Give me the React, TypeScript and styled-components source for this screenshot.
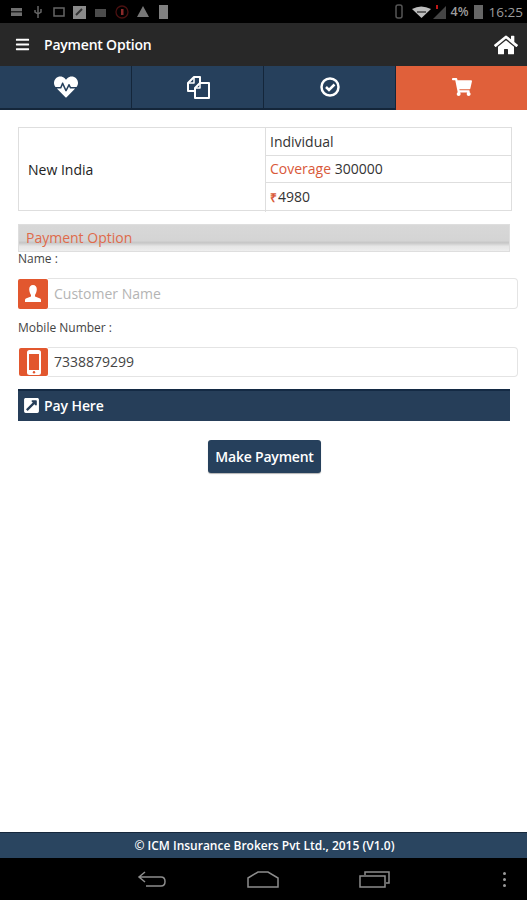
import styled, { createGlobalStyle } from "styled-components";
import { FaBars, FaHome, FaShoppingCart, FaHeartbeat, FaExternalLinkSquareAlt } from "react-icons/fa";

const GlobalStyle = createGlobalStyle`
  html, body { margin: 0; padding: 0; background: #fff; }
  * { box-sizing: border-box; }
  body { font-family: "Open Sans", "Liberation Sans", sans-serif; color: #222; }
`;

const tabs = [
  { key: "health", icon: <FaHeartbeat size={24} /> },
  {
    key: "docs",
    icon: (
      <svg width="24" height="23" viewBox="0 0 24 23" fill="none" stroke="#fff" strokeWidth="2" strokeLinejoin="round">
        <path d="M9 15H2V7l6-6h6v6" />
        <path d="M8 1v6H2" strokeWidth="1.5" />
        <path d="M9 22V12l5-5h9v15z" />
        <path d="M14 7v5H9" strokeWidth="1.5" />
      </svg>
    ),
  },
  {
    key: "check",
    icon: (
      <svg width="20" height="20" viewBox="0 0 20 20" fill="none" stroke="#fff" strokeWidth="2.5">
        <circle cx="10" cy="10" r="8.500" />
        <path d="M6 10l3 3 5.500-5.500" />
      </svg>
    ),
  },
  { key: "cart", icon: <FaShoppingCart size={20} />, active: true },
];

export default function App() {
  return (
    <Page>
      <GlobalStyle />
      <StatusBar>
        <svg width="170" height="16" viewBox="0 0 170 16">
          <rect x="11" y="4" width="11" height="8" fill="#6f6f6f" />
          <rect x="11" y="7" width="11" height="1.5" fill="#222" />
          <path d="M38 2v12M35 6v2l3 2M41 5v3l-3 2" stroke="#666" strokeWidth="1.5" fill="none" />
          <rect x="54" y="4" width="10" height="8" fill="none" stroke="#666" strokeWidth="1.5" />
          <rect x="73" y="2" width="13" height="13" fill="#8a8a8a" />
          <path d="M76 11l6-6" stroke="#333" strokeWidth="2" />
          <rect x="95" y="5" width="11" height="8" fill="#4c4c4c" />
          <circle cx="122" cy="8" r="6" fill="none" stroke="#4a1010" strokeWidth="1.3" />
          <rect x="121" y="5" width="2.5" height="6" fill="#8a2a2a" />
          <path d="M143 2l6 11h-12z" fill="#777" />
          <rect x="159" y="1" width="9" height="14" fill="#808080" />
        </svg>
        <StatusRight>
          <svg width="53" height="16" viewBox="0 0 53 16">
            <rect x="1" y="1" width="6" height="13" rx="2" fill="none" stroke="#555" strokeWidth="1.5" />
            <path d="M17 5q9-5 19 0l-9.500 9z" fill="#bdbdbd" />
            <path d="M22 8h9" stroke="#222" strokeWidth="1.2" />
            <path d="M38 15l13-13v13z" fill="#444" />
            <rect x="41" y="1" width="2" height="4" fill="#c01818" />
          </svg>
          <BatteryText>4%</BatteryText>
          <Battery />
          <Clock>16:25</Clock>
        </StatusRight>
      </StatusBar>

      <AppBar>
        <AppBarLeft>
          <FaBars size={15} />
          <AppTitle>Payment Option</AppTitle>
        </AppBarLeft>
        <FaHome size={24} />
      </AppBar>

      <Tabs>
        {tabs.map((tab) => (
          <Tab key={tab.key} $active={tab.active}>
            {tab.icon}
          </Tab>
        ))}
      </Tabs>

      <Content>
        <PlanTable>
          <PlanName>New India</PlanName>
          <PlanDetails>
            <PlanRow>Individual</PlanRow>
            <PlanRow>
              <Accent>Coverage</Accent> 300000
            </PlanRow>
            <PlanRow>
              <Rupee>₹</Rupee>4980
            </PlanRow>
          </PlanDetails>
        </PlanTable>

        <SectionHeading>Payment Option</SectionHeading>

        <FieldLabel>Name :</FieldLabel>
        <Field>
          <FieldIcon>
            <svg width="16" height="17" viewBox="0 0 16 17" fill="#fff">
              <path d="M8 0c2.400 0 3.800 1.800 3.800 4.200S10.600 9 10 10v1.500l4.500 1.700c1 .4 1.500 1 1.500 2V17H0v-1.800c0-1 .5-1.600 1.500-2L6 11.500V10C5.400 9 4.200 6.600 4.200 4.200S5.600 0 8 0z" />
            </svg>
          </FieldIcon>
          <FieldInput placeholder="Customer Name" />
        </Field>

        <MobileLabel>Mobile Number :</MobileLabel>
        <MobileField>
          <MobileIcon>
            <svg width="14" height="25" viewBox="0 0 14 25">
              <rect width="14" height="25" rx="2.500" fill="#fff" />
              <rect x="2" y="4" width="10" height="16" fill="#e2572e" />
              <circle cx="7" cy="22.300" r="1.200" fill="#e2572e" />
            </svg>
          </MobileIcon>
          <FieldInput defaultValue="7338879299" />
        </MobileField>

        <PayBar>
          <FaExternalLinkSquareAlt size={17} />
          Pay Here
        </PayBar>

        <ButtonRow>
          <PayButton>Make Payment</PayButton>
        </ButtonRow>
      </Content>

      <Footer>© ICM Insurance Brokers Pvt Ltd., 2015 (V1.0)</Footer>

      <NavBar>
        <svg width="30" height="20" viewBox="0 0 30 20">
          <path d="M8 3L2 8l6 5M2 8h22q4 0 4 4.500t-4 4.500H9" fill="none" stroke="#8d8d8d" strokeWidth="1.5" />
        </svg>
        <svg width="32" height="18" viewBox="0 0 32 18">
          <path d="M1 8L11 2h10l10 6v9H1z" fill="none" stroke="#8d8d8d" strokeWidth="1.5" />
        </svg>
        <svg width="31" height="18" viewBox="0 0 31 18">
          <path d="M6 5V2h24v11h-3" fill="none" stroke="#8d8d8d" strokeWidth="1.5" />
          <rect x="1" y="6" width="25" height="11" fill="none" stroke="#8d8d8d" strokeWidth="1.5" />
        </svg>
        <Dots>
          <i />
          <i />
          <i />
        </Dots>
      </NavBar>
    </Page>
  );
}

const Page = styled.div`
  width: 527px;
  height: 900px;
  display: flex;
  flex-direction: column;
  background: #fff;
  overflow: hidden;
`;

const StatusBar = styled.div`
  height: 23px;
  flex: none;
  background: #000;
  display: flex;
  align-items: center;
  justify-content: space-between;
  padding-right: 4px;
`;

const StatusRight = styled.div`
  display: flex;
  align-items: center;
  color: #9c9c9c;
`;

const BatteryText = styled.span`
  font-size: 12.5px;
  font-weight: 600;
  margin-left: 3px;
`;

const Battery = styled.span`
  width: 9px;
  height: 14px;
  margin-left: 5px;
  background: #666;
`;

const Clock = styled.span`
  font-size: 13.5px;
  margin-left: 6px;
`;

const AppBar = styled.header`
  height: 43px;
  flex: none;
  background: #282828;
  color: #fff;
  display: flex;
  align-items: center;
  justify-content: space-between;
  padding: 0 9px 0 15px;
`;

const AppBarLeft = styled.div`
  display: flex;
  align-items: center;
  gap: 14px;
`;

const AppTitle = styled.span`
  font-size: 14px;
  font-weight: 600;
  letter-spacing: -0.2px;
`;

const Tabs = styled.nav`
  height: 44px;
  flex: none;
  display: grid;
  grid-template-columns: 132px 132px 132px 131px;
  background: #26415e;
`;

const Tab = styled.div<{ $active?: boolean }>`
  display: flex;
  align-items: center;
  justify-content: center;
  color: #fff;
  background: ${(p) => (p.$active ? "#e0603a" : "#26405c")};
  border-right: ${(p) => (p.$active ? "none" : "1px solid #14263a")};
  border-bottom: 2px solid ${(p) => (p.$active ? "#e0603a" : "#14263a")};
`;

const Content = styled.main`
  flex: 1;
  padding: 17px 9px 0 18px;
  display: flex;
  flex-direction: column;
  align-items: stretch;
`;

const PlanTable = styled.div`
  width: 494px;
  height: 84px;
  display: grid;
  grid-template-columns: 247px 1fr;
  border: 1px solid #dedede;
  font-size: 14px;
`;

const PlanName = styled.div`
  display: flex;
  align-items: center;
  padding: 0 0 2px 9px;
  border-right: 1px solid #dedede;
  color: #222;
`;

const PlanDetails = styled.div`
  display: grid;
  grid-template-rows: 27px 27px 1fr;
`;

const PlanRow = styled.div`
  line-height: 27px;
  padding-left: 4px;
  color: #333;
  & + & {
    border-top: 1px solid #dedede;
    line-height: 26px;
  }
  &:last-child {
    line-height: 28px;
  }
`;

const Accent = styled.span`
  color: #d9593a;
`;

const Rupee = styled(Accent)`
  font-size: 12px;
  font-weight: 600;
  margin-right: 1px;
`;

const SectionHeading = styled.div`
  width: 492px;
  height: 28px;
  margin-top: 13px;
  padding: 0 0 2px 7px;
  display: flex;
  align-items: center;
  font-size: 14px;
  color: #df6a4a;
  background: linear-gradient(#d8d8d8 0%, #d4d4d4 60%, #c6c6c6 68%, #e6e6e6 82%, #eeeeee 100%);
  border: 1px solid #dedede;
`;

const FieldLabel = styled.label`
  display: block;
  font-size: 12px;
  line-height: 14px;
  color: #444;
  margin: -1px 0 12px;
  padding-top: 1px;
`;

const MobileLabel = styled(FieldLabel)`
  margin: 11px 0 12px;
`;

const Field = styled.div`
  display: flex;
  align-items: center;
  width: 500px;
  height: 31px;
`;

const MobileField = styled(Field)`
  height: 30px;
`;

const FieldIcon = styled.div`
  width: 30px;
  height: 30px;
  flex: none;
  display: flex;
  align-items: center;
  justify-content: center;
  background: #e2572e;
  color: #fff;
  border-radius: 2px;
`;

const MobileIcon = styled(FieldIcon)`
  width: 29px;
  height: 28px;
  margin-left: 1px;
`;

const FieldInput = styled.input`
  flex: 1;
  min-width: 0;
  height: 100%;
  padding: 0 6px 1px;
  font-family: inherit;
  font-size: 14px;
  color: #444;
  border: 1px solid #e4e4e4;
  border-left: none;
  border-radius: 0 4px 4px 0;
  outline: none;
  &::placeholder {
    color: #b4b4b4;
    opacity: 1;
  }
`;

const PayBar = styled.div`
  width: 492px;
  height: 32px;
  margin-top: 12px;
  padding: 0 0 2px 5px;
  display: flex;
  align-items: center;
  gap: 4px;
  background: #263e59;
  border-top: 2px solid #142a44;
  color: #fff;
  font-size: 14px;
  font-weight: 600;
  letter-spacing: -0.1px;
`;

const ButtonRow = styled.div`
  width: 492px;
  margin-top: 19px;
  padding-left: 1px;
  display: flex;
  justify-content: center;
`;

const PayButton = styled.button`
  width: 113px;
  height: 33px;
  padding: 0;
  font-family: inherit;
  font-size: 14px;
  font-weight: 600;
  letter-spacing: -0.2px;
  color: #fff;
  background: #26405c;
  border: none;
  border-radius: 3px;
  box-shadow: 0 1px 1px rgba(0, 0, 0, 0.3);
`;

const Footer = styled.footer`
  height: 26px;
  flex: none;
  padding-left: 2px;
  display: flex;
  align-items: center;
  justify-content: center;
  background: #2a4560;
  border-top: 1px solid #16283c;
  color: #fff;
  font-size: 12px;
  font-weight: 600;
`;

const NavBar = styled.div`
  height: 42px;
  flex: none;
  background: #000;
  display: flex;
  align-items: center;
  gap: 80px;
  padding-left: 137px;
`;

const Dots = styled.div`
  display: flex;
  flex-direction: column;
  gap: 3px;
  margin-left: 33px;
  i {
    display: block;
    width: 3px;
    height: 3px;
    background: #9a9a9a;
    border-radius: 50%;
  }
`;
